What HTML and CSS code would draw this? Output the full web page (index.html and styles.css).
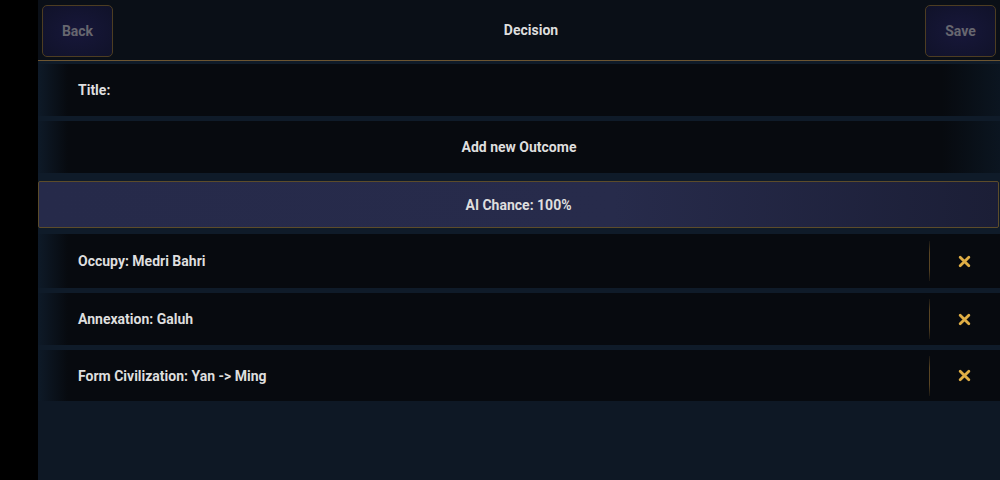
FILE: index.html
```html
<!DOCTYPE html>
<html lang="en">
<head>
	<meta charset="utf-8">
	<title>Decision</title>
	<link rel="stylesheet" href="styles.css">
</head>
<body>
	<div class="rail"></div>
	<div class="main">
		<div class="topbar">
			<button class="navBtn">Back</button>
			<div class="heading">Decision</div>
			<button class="navBtn">Save</button>
		</div>

		<div class="list">
			<div class="row row-title">Title:</div>
			<div class="row row-center row-add">Add new Outcome</div>
			<div class="row row-center row-chance">AI Chance: 100%</div>

			<div class="row row-outcome r1">
				<span class="label">Occupy: Medri Bahri</span>
				<span class="del"><svg viewBox="0 0 12 12"><path d="M2 2 L10 10 M10 2 L2 10"/></svg></span>
			</div>
			<div class="row row-outcome r2">
				<span class="label">Annexation: Galuh</span>
				<span class="del"><svg viewBox="0 0 12 12"><path d="M2 2 L10 10 M10 2 L2 10"/></svg></span>
			</div>
			<div class="row row-outcome r3">
				<span class="label">Form Civilization: Yan -&gt; Ming</span>
				<span class="del"><svg viewBox="0 0 12 12"><path d="M2 2 L10 10 M10 2 L2 10"/></svg></span>
			</div>
		</div>
	</div>
</body>
</html>
```
FILE: styles.css
```css
*{
	margin:0;
	padding:0;
	box-sizing: border-box;
}

html, body {
	height: 100%;
}

body {
	display: flex;
	background: #000;
	font-family: Roboto, "Liberation Sans", sans-serif;
	font-size: 14px;
	font-weight: 700;
	color: #dedede;
	overflow: hidden;
}

.rail {
	width: 38px;
	background: #000;
}

.main {
	flex: 1;
	display: flex;
	flex-direction: column;
	background: #0e1825;
}

/* top bar */
.topbar {
	height: 61px;
	display: flex;
	align-items: center;
	padding: 0 4px;
	background: #0a0f17;
	border-bottom: 1px solid #6d5632;
}
.heading {
	flex: 1;
	text-align: center;
	padding-left: 24px;
}
.navBtn {
	width: 71px;
	height: 52px;
	margin-top: 1px;
	background: radial-gradient(ellipse at center, #17173a 0%, #101229 100%);
	border: 1px solid #4d3d22;
	border-radius: 5px;
	color: #67676f;
	font-family: inherit;
	font-size: 14px;
	font-weight: 700;
}

/* rows */
.list {
	display: flex;
	flex-direction: column;
	padding-top: 3px;
	background: #0f1b29;
}
.row {
	display: flex;
	align-items: center;
	background: linear-gradient(to right, #0e1a28 0px, #070a0f 30px, #070a0f 94%, #0b1520 100%);
}
.row-title {
	height: 52px;
	padding-left: 40px;
	margin-bottom: 5px;
}
.row-center {
	justify-content: center;
}
.row-add {
	height: 52px;
	margin-bottom: 8px;
}
.row-chance {
	height: 47px;
	margin-right: 1px;
	margin-bottom: 6px;
	background: linear-gradient(to right, #262a4a, #272b4b 60%, #1b1e36 100%);
	border: 1px solid #5c4c2a;
	border-radius: 2px;
}
.row-outcome {
	padding-left: 40px;
	background: linear-gradient(to right, #0e1a28 0px, #070a0f 30px);
}
.r1 { height: 54px; margin-bottom: 5px; }
.r2 { height: 52px; margin-bottom: 5px; }
.r3 { height: 51px; }

.label {
	flex: 1;
}
.del {
	position: relative;
	width: 71px;
	height: 40px;
	display: flex;
	align-items: center;
	justify-content: center;
}
.del::before {
	content: "";
	position: absolute;
	left: 0;
	top: 0;
	bottom: 0;
	width: 1px;
	background: linear-gradient(to bottom, rgba(90,70,36,0.2), #5a4624 30%, #5a4624 70%, rgba(90,70,36,0.2));
}
.del svg {
	width: 13px;
	height: 13px;
	fill: none;
	stroke: #dfae45;
	stroke-width: 2.6;
	stroke-linecap: round;
}
```
